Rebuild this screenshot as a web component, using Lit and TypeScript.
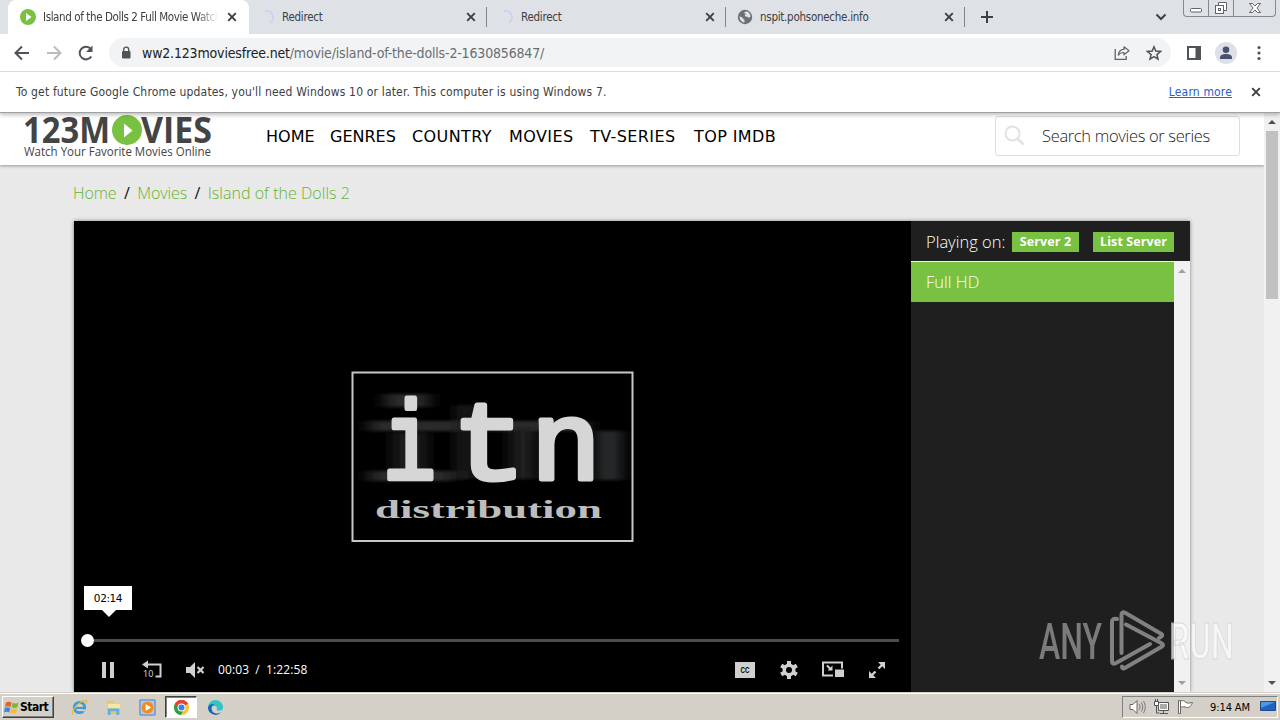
import { LitElement, html, css, svg, nothing } from 'lit';
import { customElement, property } from 'lit/decorators.js';
import { classMap } from 'lit/directives/class-map.js';

const closeIcon = html`<svg width="10" height="10" viewBox="0 0 10 10"><path d="M1.2 1.2l7.6 7.6M8.8 1.2l-7.6 7.6" stroke="#3c4043" stroke-width="1.9" fill="none" /></svg>`;

const favicons: Record<string, unknown> = {
  play: svg`<circle cx="8" cy="8" r="8" fill="#79c142"/><path d="M6 4l5.5 4L6 12z" fill="#fff"/>`,
  spinner: svg`<path d="M6 2a6.500 6.500 0 0 1 5 11.800" fill="none" stroke="#cdd0f0" stroke-width="1.800"/>`,
  globe: svg`<circle cx="8" cy="8" r="7.200" fill="#6d7075"/><path d="M2.500 7.500c2 .3 3 .8 3.500 2 .5 1 1.500.7 1.500 2v2c-3-.2-5-3-5-6zM7 4c.5-1 2-1.500 3-1.500 2 .8 3.500 2.800 3.500 5-.8 1.500-2 1.500-2.700.5-1-.7-2.800-.3-3-1.500s1.500-.8 1.200-1.500z" fill="#dee1e6"/>`,
};

@customElement('browser-tab')
class BrowserTab extends LitElement {
  @property() label = '';
  @property() icon = 'spinner';
  @property({ type: Boolean }) active = false;
  @property({ type: Boolean }) divider = false;

  static styles = css`
    :host {
      display: block;
      width: 239px;
      height: 34px;
    }
    .tab {
      display: flex;
      align-items: center;
      box-sizing: border-box;
      width: 241px;
      height: 34px;
      padding: 0 12px;
      font: 11.5px 'DejaVu Sans Condensed', 'DejaVu Sans', sans-serif;
      letter-spacing: -0.27px;
      color: #3c4043;
    }
    .active {
      background: #fff;
      border-radius: 8px 8px 0 0;
    }
    .label {
      flex: 1;
      overflow: hidden;
      white-space: nowrap;
      margin: 0 9px 0 7px;
    }
    .active .label {
      letter-spacing: -0.4px;
      -webkit-mask-image: linear-gradient(90deg, #000 88%, transparent);
      mask-image: linear-gradient(90deg, #000 88%, transparent);
    }
    .bar {
      width: 1px;
      height: 20px;
      margin: 0 -11px 0 10px;
      background: #80868b;
    }
  `;

  render() {
    return html`
      <div class=${classMap({ tab: true, active: this.active })}>
        <svg width="16" height="16" viewBox="0 0 16 16">${favicons[this.icon]}</svg>
        <span class="label">${this.label}</span>
        ${closeIcon}
        ${this.divider ? html`<span class="bar"></span>` : nothing}
      </div>
    `;
  }
}

@customElement('scroll-bar')
class ScrollBar extends LitElement {
  @property() arrow = '#505050';
  @property({ type: Number }) thumb = 0;

  static styles = css`
    :host {
      display: flex;
      flex-direction: column;
      align-items: center;
      width: 16px;
      background: #f1f1f1;
    }
    svg {
      display: block;
      flex: none;
    }
    .track {
      flex: 1;
    }
    .thumb {
      width: 12px;
      background: #c1c1c1;
    }
  `;

  render() {
    return html`
      <svg width="16" height="18" viewBox="0 0 16 18"><path d="M4 11l4-4 4 4z" fill=${this.arrow} /></svg>
      <div class="track"><div class="thumb" style="height:${this.thumb}px"></div></div>
      <svg width="16" height="18" viewBox="0 0 16 18"><path d="M4 7l4 4 4-4z" fill=${this.arrow} /></svg>
    `;
  }
}

@customElement('browser-chrome')
class BrowserChrome extends LitElement {
  static styles = css`
    :host {
      display: block;
      position: relative;
      z-index: 2;
      font-family: 'DejaVu Sans Condensed', 'DejaVu Sans', sans-serif;
      color: #3c4043;
      background: #fff;
      box-shadow: 0 2px 4px rgba(0, 0, 0, 0.25);
    }
    .strip {
      display: flex;
      align-items: center;
      height: 34px;
      padding-left: 8px;
      background: #dee1e6;
    }
    .plus {
      margin-left: 16px;
    }
    .more {
      margin-left: auto;
      margin-right: 16px;
    }
    .window {
      align-self: flex-start;
      display: flex;
      width: 93px;
      height: 17px;
      margin-right: 4px;
      border: 1px solid #85898f;
      border-top: 0;
      border-radius: 0 0 4px 4px;
      box-sizing: border-box;
    }
    .window span {
      flex: 25;
      display: flex;
      justify-content: center;
    }
    .window span + span {
      border-left: 1px solid #85898f;
    }
    .window .wide {
      flex: 42;
    }
    .toolbar {
      display: flex;
      align-items: center;
      height: 37px;
      padding: 0 12px 0 13px;
      border-bottom: 1px solid #dadce0;
    }
    .toolbar > svg {
      flex: none;
    }
    .nav {
      margin-right: 14px;
    }
    .address {
      flex: 1;
      display: flex;
      align-items: center;
      height: 29px;
      margin: 0 15px 0 0;
      padding: 0 9px 0 11px;
      border-radius: 15px;
      background: #f1f3f4;
      font-size: 14px;
      letter-spacing: -0.17px;
      color: #6a6e73;
    }
    .url {
      flex: 1;
      margin-left: 10px;
    }
    .url b {
      font-weight: normal;
      color: #202124;
    }
    .address .share {
      margin-right: 16px;
    }
    .avatar {
      margin: 0 14px;
    }
    .info {
      display: flex;
      align-items: center;
      height: 39px;
      padding: 0 19px 1px 16px;
      border-bottom: 1px solid #a0a0a0;
      font-size: 12px;
      letter-spacing: 0.165px;
    }
    .info a {
      margin-left: auto;
      margin-right: 19px;
      color: #2a62c4;
      text-decoration: underline;
    }
  `;

  render() {
    return html`
      <div class="strip">
        <browser-tab active icon="play" label="Island of the Dolls 2 Full Movie Watch Online"></browser-tab>
        <browser-tab divider label="Redirect"></browser-tab>
        <browser-tab divider label="Redirect"></browser-tab>
        <browser-tab divider icon="globe" label="nspit.pohsoneche.info"></browser-tab>
        <svg class="plus" width="13" height="12" viewBox="0 0 13 12"><path d="M7 0v12M1 6h12" stroke="#3c4043" stroke-width="2" /></svg>
        <svg class="more" width="12" height="8" viewBox="0 0 12 8"><path d="M1.500 1.500L6 6l4.500-4.500" fill="none" stroke="#3c4043" stroke-width="2" /></svg>
        <div class="window">
          <span><svg width="14" height="15"><rect x="1.500" y="8.500" width="11" height="3.500" rx="1" fill="#fff" stroke="#5f646b" /></svg></span>
          <span><svg width="14" height="15"><path d="M4.500 5V2.500h8v8H10" fill="#fff" stroke="#5f646b" /><rect x="1.500" y="5.500" width="8" height="8" fill="#fff" stroke="#5f646b" /><rect x="4.500" y="8.500" width="2" height="2" fill="none" stroke="#5f646b" /></svg></span>
          <span class="wide"><svg width="14" height="15"><path d="M1.500 3.500h3L7 6l2.500-2.500h3L9 8l3.500 4.500h-3L7 10l-2.500 2.500h-3L5 8z" fill="#fff" stroke="#5f646b" /></svg></span>
        </div>
      </div>
      <div class="toolbar">
        <svg class="nav" width="18" height="18" viewBox="0 0 18 18"><path d="M16 9H3M9 2.500L2.500 9 9 15.500" fill="none" stroke="#505458" stroke-width="2" /></svg>
        <svg class="nav" width="18" height="18" viewBox="0 0 18 18"><path d="M2 9h13M9 2.500L15.500 9 9 15.500" fill="none" stroke="#b9bbbe" stroke-width="2" /></svg>
        <svg class="nav" width="18" height="18" viewBox="0 0 18 18"><path d="M14.300 12.500A6.300 6.300 0 1 1 13.800 5" fill="none" stroke="#505458" stroke-width="2" /><path d="M15.500 1.500V8H9z" fill="#505458" /></svg>
        <div class="address">
          <svg width="12" height="14" viewBox="0 0 12 14"><rect x="2" y="5" width="8.500" height="7.500" rx="1" fill="#505458" /><path d="M3.700 6V3.600a2.500 2.500 0 0 1 5 0V6" fill="none" stroke="#505458" stroke-width="1.400" /></svg>
          <span class="url"><b>ww2.123moviesfree.net</b>/movie/island-of-the-dolls-2-1630856847/</span>
          <svg class="share" width="16" height="16" viewBox="0 0 16 16"><path d="M1.200 4v10.300h11V11" fill="none" stroke="#5f6368" stroke-width="1.300" /><path d="M10 1.800l5 4-5 4V7.500c-2.500 0-4.500.8-5.700 2.700.3-3.500 2.200-5.600 5.700-6z" fill="none" stroke="#5f6368" stroke-width="1.200" stroke-linejoin="round" /></svg>
          <svg width="16" height="16" viewBox="0 0 16 16"><path d="M8 1.800l1.800 4.300 4.700.4-3.600 3.100 1.100 4.600L8 11.700l-4 2.500 1.100-4.600L1.500 6.500l4.700-.4z" fill="none" stroke="#505458" stroke-width="1.500" /></svg>
        </div>
        <svg width="15" height="14" viewBox="0 0 15 14"><path d="M1 0h14v14H1zM3 2v10h6.500V2z" fill="#505458" fill-rule="evenodd" /></svg>
        <svg class="avatar" width="22" height="22" viewBox="0 0 22 22"><circle cx="11" cy="11" r="11" fill="#dde0e6" /><circle cx="11" cy="7.800" r="3.300" fill="#495070" /><path d="M5 17v-1.500c0-2.500 3-3.500 6-3.500s6 1 6 3.500V17z" fill="#495070" /></svg>
        <svg width="17" height="18" viewBox="0 0 17 18" fill="#505458"><circle cx="8" cy="3.500" r="1.600" /><circle cx="8" cy="9" r="1.600" /><circle cx="8" cy="14.500" r="1.600" /></svg>
      </div>
      <div class="info">
        <span>To get future Google Chrome updates, you'll need Windows 10 or later. This computer is using Windows 7.</span>
        <a>Learn more</a>
        ${closeIcon}
      </div>
    `;
  }
}

@customElement('site-header')
class SiteHeader extends LitElement {
  static styles = css`
    :host {
      display: flex;
      align-items: flex-start;
      box-sizing: border-box;
      height: 52px;
      padding: 0 24px 0 22px;
      background: #fff;
      box-shadow: 0 1px 3px rgba(0, 0, 0, 0.35);
      position: relative;
    }
    .brand {
      flex: none;
      width: 192px;
      height: 48px;
      overflow: visible;
      font-family: 'Open Sans', sans-serif;
      fill: #444;
    }
    .brand .big {
      font-size: 36px;
      font-weight: 700;
    }
    .brand .small {
      font-size: 12.5px;
    }
    nav {
      display: grid;
      grid-template-columns: 64px 82px 97px 81px 104px auto;
      margin: 14px 0 0 52px;
      font: 16px/20px 'DejaVu Sans', sans-serif;
      letter-spacing: 0.4px;
      color: #000;
      white-space: nowrap;
    }
    nav span:nth-child(-n + 2) {
      letter-spacing: 0;
    }
    .search {
      display: flex;
      align-items: center;
      box-sizing: border-box;
      width: 245px;
      height: 40px;
      margin: 3px 0 0 auto;
      padding: 0 0 2px 8px;
      border: 1px solid #ddd;
      border-radius: 3px;
      font: 300 16.5px 'Open Sans', sans-serif;
      letter-spacing: -0.34px;
      color: #222;
    }
    .search span {
      margin-left: 17px;
    }
  `;

  render() {
    const items = ['HOME', 'GENRES', 'COUNTRY', 'MOVIES', 'TV-SERIES', 'TOP IMDB'];
    return html`
      <svg class="brand" viewBox="0 0 192 48">
        <text class="big" x="1" y="30" textLength="87" lengthAdjust="spacingAndGlyphs">123M</text>
        <circle cx="105" cy="17" r="15" fill="#79c142" />
        <path d="M102 10.500l8.500 7-8.500 7z" fill="#fff" />
        <text class="big" x="119" y="30" textLength="71" lengthAdjust="spacingAndGlyphs">VIES</text>
        <text class="small" x="2" y="43" textLength="187" lengthAdjust="spacingAndGlyphs">Watch Your Favorite Movies Online</text>
      </svg>
      <nav>${items.map((item) => html`<span>${item}</span>`)}</nav>
      <div class="search">
        <svg width="21" height="21" viewBox="0 0 21 21"><circle cx="8.500" cy="8.500" r="7" fill="none" stroke="#e2e2e2" stroke-width="2" /><path d="M13.500 13.500l6 6" stroke="#e2e2e2" stroke-width="2.500" /></svg>
        <span>Search movies or series</span>
      </div>
    `;
  }
}

@customElement('movie-player')
class MoviePlayer extends LitElement {
  static styles = css`
    :host {
      display: flex;
      box-shadow: 0 0 4px rgba(0, 0, 0, 0.45);
      background: #000;
      font-family: 'Open Sans', sans-serif;
      color: #fff;
    }
    .video {
      position: relative;
      display: flex;
      flex-direction: column;
      width: 837px;
    }
    .screen {
      flex: 1;
      display: flex;
      flex-direction: column;
      align-items: flex-start;
      padding: 150px 0 0 277px;
    }
    .itn {
      font: 400 111px 'Liberation Mono', monospace;
      fill: #d6d6d6;
    }
    .itn .word {
      stroke: #d6d6d6;
      stroke-width: 5;
      stroke-linejoin: round;
    }
    .itn .sub {
      font: 700 25px 'Liberation Serif', serif;
      fill: #bdbdbd;
    }
    .tip {
      position: absolute;
      left: 10px;
      top: 365px;
      width: 48px;
      height: 24px;
      font: 10.5px/24px 'DejaVu Sans', sans-serif;
      letter-spacing: -0.4px;
      text-align: center;
      color: #000;
      background: #fff;
    }
    .tip::after {
      content: '';
      position: absolute;
      left: 18px;
      top: 24px;
      border: 7px solid transparent;
      border-top-color: #fff;
      border-bottom: 0;
    }
    .seek {
      display: flex;
      align-items: center;
      height: 14px;
      padding: 0 12px 0 7px;
    }
    .knob {
      width: 13px;
      height: 13px;
      border-radius: 50%;
      background: #fff;
    }
    .rail {
      flex: 1;
      height: 3px;
      background: #4d4d4d;
    }
    .controls {
      display: flex;
      align-items: center;
      height: 45px;
      padding: 0 25px 0 24px;
      font: 12px 'Open Sans', sans-serif;
    }
    .time {
      margin-left: 10px;
      letter-spacing: 0.1px;
      word-spacing: 3px;
    }
    .controls .rewind {
      margin: 0 20px 0 22px;
    }
    .controls .cc {
      margin-left: auto;
    }
    .controls .gap {
      margin-left: 24px;
    }
    .controls .pip {
      margin-left: 23px;
    }
    .rewind text {
      font: 9px 'Open Sans', sans-serif;
      fill: #ddd;
    }
    .cc text {
      font: 700 9px 'Liberation Sans', sans-serif;
    }
    .side {
      flex: 1;
      display: flex;
      flex-direction: column;
      background: #1f1f1f;
    }
    .servers {
      display: flex;
      align-items: center;
      height: 40px;
      padding: 0 16px 0 15px;
      border-bottom: 1px solid #f1f1f1;
      font-size: 16.5px;
      font-weight: 300;
      white-space: nowrap;
    }
    .badge {
      width: 67px;
      margin-left: auto;
      margin-top: 2px;
      font: 700 12.5px/20px 'Open Sans', sans-serif;
      letter-spacing: 0.1px;
      text-align: center;
      background: #79c142;
    }
    .badge + .badge {
      width: 81px;
      margin-left: 14px;
    }
    .list {
      flex: 1;
      display: flex;
    }
    .items {
      flex: 1;
    }
    .episode {
      height: 40px;
      padding-left: 15px;
      font: 300 16.5px/40px 'Open Sans', sans-serif;
      background: #79c142;
    }
  `;

  render() {
    return html`
      <div class="video">
        <div class="screen">
          <svg class="itn" width="283" height="172" viewBox="0 0 283 172">
            <defs>
              <filter id="smear" x="-20%" y="-20%" width="140%" height="140%"><feGaussianBlur stdDeviation="8 1.500" /></filter>
            </defs>
            <g filter="url(#smear)" fill="#2b2b2b">
              <rect x="34" y="23" width="44" height="13" />
              <rect x="18" y="50" width="220" height="10" />
              <rect x="18" y="100" width="84" height="10" />
              <rect x="42" y="62" width="34" height="38" fill="#1c1c1c" />
              <rect x="106" y="34" width="20" height="74" fill="#1c1c1c" />
              <rect x="160" y="56" width="24" height="52" fill="#202020" />
              <rect x="246" y="60" width="24" height="49" fill="#2b2f2f" />
            </g>
            <rect x="1.500" y="1.500" width="280" height="168.500" fill="none" stroke="#c8c8c8" stroke-width="2" />
            <g class="word">
              <text x="32" y="108" textLength="53" lengthAdjust="spacingAndGlyphs">i</text>
              <text x="101" y="108" textLength="74" lengthAdjust="spacingAndGlyphs">t</text>
              <text x="180" y="108" textLength="70" lengthAdjust="spacingAndGlyphs">n</text>
            </g>
            <text class="sub" x="24" y="147" textLength="227" lengthAdjust="spacingAndGlyphs">distribution</text>
          </svg>
        </div>
        <div class="tip">02:14</div>
        <div class="seek"><span class="knob"></span><span class="rail"></span></div>
        <div class="controls">
          <svg width="20" height="20" viewBox="0 0 20 20" fill="#d0d0d0"><path d="M4 2h4v16H4zM12 2h4v16h-4z" /></svg>
          <svg class="rewind" width="24" height="20" viewBox="0 0 24 20"><path d="M7 4.500h13.500v12h-5" fill="none" stroke="#d0d0d0" stroke-width="2" /><path d="M8 .500v8l-6-4z" fill="#d0d0d0" /><text x="3" y="17">10</text></svg>
          <svg width="24" height="20" viewBox="0 0 24 20"><path d="M2 7h4l5-5v16l-5-5H2z" fill="#d0d0d0" /><path d="M13.500 7l6 6M19.500 7l-6 6" stroke="#d0d0d0" stroke-width="2.200" /></svg>
          <span class="time">00:03 / 1:22:58</span>
          <svg class="cc" width="20" height="16" viewBox="0 0 20 16"><path d="M0 0h20v16H0z" fill="#d0d0d0" /><text x="5.500" y="11" textLength="9" lengthAdjust="spacingAndGlyphs">CC</text></svg>
          <svg class="gap" width="20" height="20" viewBox="0 0 20 20"><g stroke="#d0d0d0" stroke-width="4"><path d="M10 1v18M2.200 5.500l15.600 9M2.200 14.500l15.600-9" /></g><circle cx="10" cy="10" r="6.500" fill="#d0d0d0" /><circle cx="10" cy="10" r="3" fill="#000" /></svg>
          <svg class="pip" width="22" height="17" viewBox="0 0 22 17"><path d="M11 14.500H1v-13h19v6" fill="none" stroke="#d0d0d0" stroke-width="2" /><path d="M13 8.500h9V16h-9z" fill="#d0d0d0" /><path d="M5 4.500l4 4" stroke="#d0d0d0" stroke-width="2" /><path d="M10.500 4.500v5h-5z" fill="#d0d0d0" /></svg>
          <svg class="gap" width="18" height="18" viewBox="0 0 18 18"><path d="M10 1h7v7zM1 10v7h7z" fill="#d0d0d0" /><path d="M10.500 7.500l4-4M3.500 14.500l4-4" stroke="#d0d0d0" stroke-width="2.400" /></svg>
        </div>
      </div>
      <div class="side">
        <div class="servers">
          <span>Playing on:</span>
          <span class="badge">Server 2</span>
          <span class="badge">List Server</span>
        </div>
        <div class="list">
          <div class="items"><div class="episode">Full HD</div></div>
          <scroll-bar arrow="#a0a0a0"></scroll-bar>
        </div>
      </div>
    `;
  }
}

@customElement('task-bar')
class TaskBar extends LitElement {
  static styles = css`
    :host {
      display: flex;
      align-items: center;
      box-sizing: border-box;
      height: 28px;
      padding: 1px 2px 0;
      border-top: 1px solid #d4d0c8;
      background: #d4d0c8;
      box-shadow: inset 0 1px #fff;
      font: 11px 'DejaVu Sans Condensed', 'DejaVu Sans', sans-serif;
      color: #000;
    }
    .start {
      display: flex;
      align-items: center;
      box-sizing: border-box;
      width: 52px;
      height: 22px;
      padding-left: 1px;
      border: 1px solid;
      border-color: #fff #404040 #404040 #fff;
      box-shadow: inset -1px -1px #808080;
      font-size: 12px;
      font-weight: 700;
      letter-spacing: -0.5px;
    }
    .apps {
      display: flex;
      align-items: center;
      margin-left: 9px;
      gap: 2px;
    }
    .app {
      display: flex;
      align-items: center;
      justify-content: center;
      box-sizing: border-box;
      width: 32px;
      height: 22px;
    }
    .pressed {
      background: #fff;
      border: 1px solid;
      border-color: #404040 #fff #fff #404040;
      box-shadow: inset 1px 1px #808080;
    }
    .tray {
      display: flex;
      align-items: center;
      box-sizing: border-box;
      width: 156px;
      height: 22px;
      margin-left: auto;
      padding: 0 1px 0 6px;
      gap: 7px;
      border: 1px solid;
      border-color: #808080 #fff #fff #808080;
    }
    .clock {
      margin-left: 9px;
      margin-right: auto;
      letter-spacing: -0.1px;
      white-space: nowrap;
    }
  `;

  render() {
    const apps = [
      svg`<circle cx="9" cy="9" r="5.500" fill="none" stroke="#3f9ad8" stroke-width="3"/><path d="M5 9.500h10" stroke="#3f9ad8" stroke-width="2.200"/><path d="M11 11h6v2h-6z" fill="#d4d0c8"/><path d="M2 16.500C-1 13 9 2 15.500 1.500c1.500.3 1.500 2 .5 3.500" fill="none" stroke="#e8b93c" stroke-width="1.300"/>`,
      svg`<path d="M2 2h7l1 2h6v12H2z" fill="#e5c866"/><path d="M3 5h13v5H3z" fill="#f7e7a6"/><path d="M3 17v-7h12v7h-3v-4H6v4z" fill="#67aee0"/>`,
      svg`<path d="M1 1h16v16H1z" fill="#a9c9e8" stroke="#4b7eb5"/><circle cx="9" cy="9" r="6.200" fill="#f48a1c"/><path d="M7 5.500l6 3.500-6 3.500z" fill="#fff"/>`,
      svg`<circle cx="9" cy="9" r="8" fill="#f6c62d"/><path d="M9 9L2.100 5A8 8 0 0 1 15.900 5z" fill="#e34234"/><path d="M9 9L2.100 5A8 8 0 0 0 8.200 17l3.500-6z" fill="#2b9e4d"/><path d="M9 5h6.900A8 8 0 0 0 2.100 5L6 11z" fill="#e34234"/><circle cx="9" cy="9" r="4.200" fill="#fff"/><circle cx="9" cy="9" r="3.200" fill="#3f7de8"/>`,
      svg`<path d="M1 9a8 8 0 0 1 16 0c0 2.500-2 3.500-4.200 3.500-2 0-3-1-2.300-2C11 9 10 7.500 8 7.500 4.500 7.500 2 10 1 9z" fill="#36c3c4"/><path d="M1 9c1-3 4-4 7-3.500-3 1-4 4-2.500 7s5 4 9.500 1.500A8 8 0 0 1 1 9z" fill="#1267b8"/>`,
    ];
    return html`
      <div class="start">
        <svg width="16" height="16" viewBox="0 0 16 16"><path d="M2 3.500c2-1.200 3.500-1 5.500 0L6.500 8C4.500 7 3 7 1 8z" fill="#e4602c" /><path d="M8.500 3.800c2 .9 4 .9 6-.3l-1 4.500c-2 1.200-4 1.200-6 .2z" fill="#79b83c" /><path d="M.8 9c2-1.200 3.500-1 5.500 0l-1 4.500c-2-1-3.500-1-5.300 0z" fill="#3d86d8" /><path d="M7.300 9.300c2 .9 4 .9 6-.3l-1 4.500c-2 1.200-4 1.200-6 .2z" fill="#f3bd32" /></svg>
        <span>Start</span>
      </div>
      <div class="apps">
        ${apps.map((icon, i) => html`<span class=${classMap({ app: true, pressed: i === 3 })}><svg width="17" height="17" viewBox="0 0 18 18">${icon}</svg></span>`)}
      </div>
      <div class="tray">
        <svg width="17" height="16" viewBox="0 0 17 16"><path d="M1 5.500h3l4-4v13l-4-4H1z" fill="#fff" stroke="#666" /><path d="M10 5c1.300 2 1.300 4 0 6M12.300 3.500c2 3 2 6 0 9M14.500 2c2.300 4 2.300 8 0 12" fill="none" stroke="#777" /></svg>
        <svg width="17" height="16" viewBox="0 0 17 16"><path d="M5.500 3.500h10v8h-10z" fill="#aaa" stroke="#555" /><path d="M6.500 4.500h8v6h-8z" fill="none" stroke="#fff" /><path d="M7 14.500h8M10.500 12v2M3.500 7v7h3" stroke="#555" fill="none" /><path d="M1.500 2.500h4v4h-4zM2.500 0v2M4.500 0v2" fill="#fff" stroke="#555" /></svg>
        <svg width="17" height="16" viewBox="0 0 17 16"><path d="M1.500 1.500h2v13h-2z" fill="#fff" stroke="#555" stroke-width="0.900" /><path d="M3.500 2c3-1 4 0 5.500 1.500 2 1 4 .5 6.500 0-1 3-3 5.500-6 5-2-1-3.500-1-6 0z" fill="#fff" stroke="#666" /></svg>
        <span class="clock">9:14 AM</span>
        <svg width="16" height="14" viewBox="0 0 16 14"><path d="M.5 1.500h15v9H.5z" fill="#1f62c4" stroke="#234a86" /><path d="M1 2h14L1 8z" fill="#4c97e6" /><path d="M5 11h6l2 2H3z" fill="#c9d4e2" /></svg>
      </div>
    `;
  }
}

@customElement('app-root')
class AppRoot extends LitElement {
  static styles = css`
    :host {
      display: flex;
      flex-direction: column;
      position: relative;
      width: 1280px;
      height: 720px;
      overflow: hidden;
    }
    .viewport {
      flex: 1;
      display: flex;
      min-height: 0;
    }
    .page {
      flex: 1;
      display: flex;
      flex-direction: column;
      overflow: hidden;
      background: #e9e9e9;
    }
    .crumbs {
      display: flex;
      gap: 7.5px;
      margin: 16px 0 0 73px;
      height: 24px;
      font: 300 16px/24px 'Open Sans', sans-serif;
      letter-spacing: -0.1px;
      color: #111;
    }
    .crumbs a {
      color: #67b32e;
    }
    .crumbs a:last-child {
      letter-spacing: 0.03px;
    }
    .crumbs span {
      font-weight: 400;
    }
    movie-player {
      flex: 1;
      width: 1116px;
      margin: 16px 0 0 74px;
    }
    .mark {
      position: absolute;
      left: 1036px;
      top: 606px;
      z-index: 3;
      overflow: visible;
      font: 500 50px Roboto, sans-serif;
      fill: #868686;
      opacity: 0.9;
    }
    .mark .light {
      fill: #fafafa;
      opacity: 0.8;
      stroke: #ccc;
      stroke-width: 0.8;
    }
  `;

  render() {
    return html`
      <browser-chrome></browser-chrome>
      <div class="viewport">
        <div class="page">
          <site-header></site-header>
          <div class="crumbs"><a>Home</a><span>/</span><a>Movies</a><span>/</span><a>Island of the Dolls 2</a></div>
          <movie-player></movie-player>
        </div>
        <scroll-bar thumb="168"></scroll-bar>
      </div>
      <task-bar></task-bar>
      <svg class="mark" width="206" height="70" viewBox="0 0 206 70">
        <text x="3" y="53" textLength="63" lengthAdjust="spacingAndGlyphs">ANY</text>
        <text class="light" x="133" y="53" textLength="65" lengthAdjust="spacingAndGlyphs">RUN</text>
        <g fill="none" stroke="#8c8c8c" stroke-width="4" stroke-linejoin="round" stroke-linecap="round">
          <path d="M85.500 47V9q0-4 4-2l36 21q2 2-2.500 4" />
          <path d="M90 18.500l36 19q2 1.500 0 3L88 62.500q-2 0-2-2" />
          <path d="M81 13q-5-1-5 3v39q0 4 4 2l34-19" />
        </g>
      </svg>
    `;
  }
}
